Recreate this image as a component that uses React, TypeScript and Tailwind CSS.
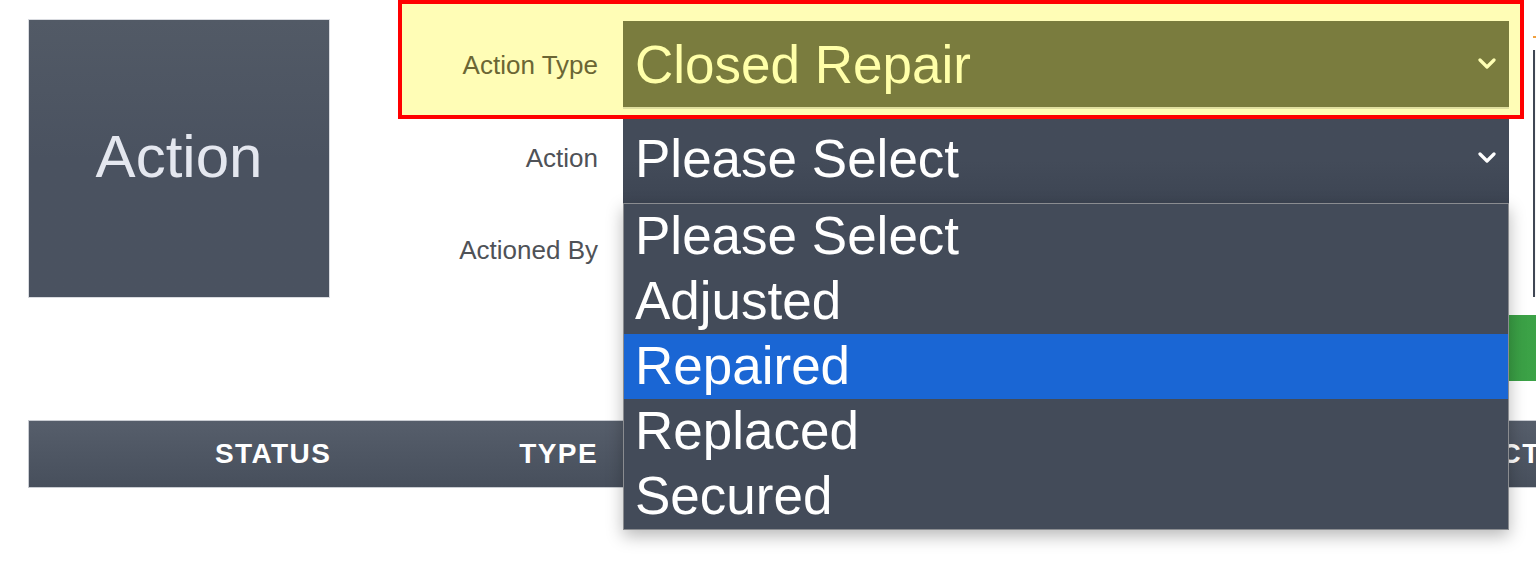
import React from "react";

function Chevron({ color }: { color: string }) {
  return (
    <svg width="20" height="12" viewBox="0 0 20 12" className="shrink-0">
      <polyline points="3,2 10,9 17,2" fill="none" stroke={color} strokeWidth="3.2" strokeLinecap="round" strokeLinejoin="round" />
    </svg>
  );
}

const items = ["Please Select", "Adjusted", "Repaired", "Replaced", "Secured"];

export default function App() {
  return (
    <div
      className="relative w-[1536px] h-[580px] overflow-hidden bg-white"
      style={{ fontFamily: '"Liberation Sans", Arial, sans-serif' }}
    >
      <div className="flex items-start">
        {/* Action tile */}
        <div className="ml-[28px] mt-[19px] w-[302px] h-[279px] shrink-0 bg-gradient-to-b from-[#525a66] via-[#4a5260] to-[#4a5260] border border-[#d9dbe0] flex items-center justify-center">
          <span className="text-[60px] leading-none text-[#e4e7ef] -mt-[4px]">Action</span>
        </div>

        {/* Form column */}
        <div className="ml-[68px] w-[1126px] shrink-0 flex flex-col">
          {/* Highlighted Action Type row */}
          <div className="h-[119px] border-4 border-[#ff0000] bg-[#fffdb6] flex items-start pt-[17px]">
            <div className="w-[196px] h-[88px] flex items-center justify-end text-[26px] text-[#6b6634]">
              Action Type
            </div>
            <div className="ml-[25px] w-[886px] h-[88px] bg-[#7a7c3e] border-b-[2px] border-[#e0dfa0] flex items-center justify-between pl-[12px] pr-[12px]">
              <span className="text-[53px] leading-none text-[#ffffa8]">Closed Repair</span>
              <Chevron color="#ffffb4" />
            </div>
          </div>

          {/* Action row */}
          <div className="h-[84px] flex items-center">
            <div className="w-[200px] text-right text-[26px] text-[#4f5257] pb-[6px]">Action</div>
            <div className="ml-[25px] w-[886px] h-[84px] bg-gradient-to-b from-[#434b59] via-[#434b59] to-[#3d4553] flex items-center justify-between pl-[12px] pr-[12px] pb-[6px]">
              <span className="text-[53px] leading-none text-white">Please Select</span>
              <Chevron color="#ffffff" />
            </div>
          </div>

          {/* Actioned By row */}
          <div className="h-[94px] flex items-center">
            <div className="w-[200px] text-right text-[26px] text-[#4f5257]">Actioned By</div>
            <div className="ml-[25px] w-[886px] h-[84px] bg-[#434b59]" />
          </div>

          {/* Save button */}
          <div className="mt-[18px] ml-[1110px] w-[120px] h-[66px] bg-gradient-to-r from-[#3a9f45] to-[#42ae4d]" />
        </div>

        {/* Right panel (clipped) */}
        <div className="ml-[9px] shrink-0 flex flex-col">
          <div className="mt-[36px] w-[3px] h-[2px] bg-[#f0a040]" />
          <div className="mt-[12px] w-[200px] h-[247px] border-l-2 border-[#3f4654] bg-[#f7f7f7]" />
        </div>
      </div>

      {/* Table header */}
      <div className="mt-[39px] ml-[28px] w-[1600px] h-[68px] bg-gradient-to-b from-[#565e6b] to-[#474f5c] border border-[#c9ccd2] flex items-center text-white font-bold text-[28px] tracking-[1.4px] whitespace-nowrap">
        <span className="ml-[186px] shrink-0">STATUS</span>
        <span className="ml-[188px] shrink-0">TYPE</span>
        <span className="ml-[881px] shrink-0">ACTION</span>
      </div>

      {/* Open dropdown list */}
      <div className="absolute left-[623px] top-[203px] w-[886px] border border-[#8a8c90] bg-[#434b59] shadow-[0_6px_16px_rgba(0,0,0,0.28)]">
        {items.map((it) => (
          <div
            key={it}
            className={
              "h-[65px] flex items-center pl-[11px] pb-[2px] text-[53px] leading-none text-white " +
              (it === "Repaired" ? "bg-[#1a66d4]" : "")
            }
          >
            {it}
          </div>
        ))}
      </div>
    </div>
  );
}
